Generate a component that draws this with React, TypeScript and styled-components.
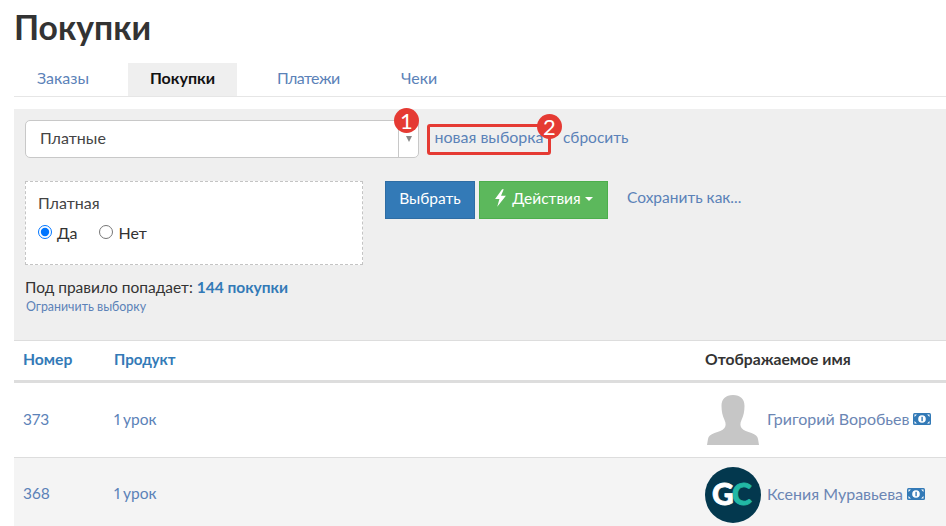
import React from "react";
import styled, { createGlobalStyle } from "styled-components";

const Global = createGlobalStyle`
  html, body { margin: 0; padding: 0; background: #fff; overflow: hidden; }
  body { font-family: "Lato", "Noto Sans", "Liberation Sans", sans-serif; font-size: 15.5px; color: #333; }
`;

const Page = styled.div`
  width: 946px; height: 526px; overflow: hidden; padding-left: 14px; box-sizing: border-box;
`;
const Title = styled.h1`
  margin: 0; height: 63px; box-sizing: border-box; padding: 8px 0 0; font-size: 33.7px; line-height: 38px; font-weight: 700; color: #333;
`;
const Tabs = styled.nav`
  display: flex; height: 34px; box-sizing: border-box; border-bottom: 1px solid #e6e6e6; margin-bottom: 12px;
`;
const Tab = styled.a<{ $pad: number; $w: number; $tight?: boolean }>`
  width: ${p => p.$w}px; height: 33px; box-sizing: border-box; display: flex; align-items: center;
  padding: 0 0 4px ${p => p.$pad}px; font-size: 16px; color: #5b82b8;
  letter-spacing: ${p => (p.$tight ? "-0.6px" : "0")};
`;
const ActiveTab = styled.a`
  width: 109px; height: 33px; box-sizing: border-box; display: flex; align-items: center; justify-content: center;
  padding-bottom: 4px; font-size: 16px; font-weight: 700; color: #111; background: #efefef;
`;
const Panel = styled.section`
  height: 232px; box-sizing: border-box; background: #efefef; padding: 11px 11px 0; border-bottom: 1px solid #ddd;
`;
const SelectRow = styled.div`
  display: flex; align-items: center; height: 38px;
`;
const Select = styled.div`
  position: relative; width: 394px; height: 38px; box-sizing: border-box; background: #fff;
  border: 1px solid #c8c8c8; border-radius: 5px; display: flex; align-items: center;
  padding: 0 0 3px 14px; font-size: 16px; color: #444;
`;
const Arrow = styled.div`
  position: absolute; right: 0; top: 0; bottom: 0; width: 19px; border-left: 1px solid #c8c8c8;
  display: flex; align-items: center; justify-content: center;
  &::after { content: ""; border-left: 3.5px solid transparent; border-right: 3.5px solid transparent; border-top: 6px solid #888; }
`;
const Badge = styled.span<{ $left: number }>`
  position: absolute; left: ${p => p.$left}px; top: -13px; width: 25px; height: 25px; border-radius: 50%;
  background: #e53a33; color: #fff; font-size: 22px; line-height: 25px; text-align: center; font-weight: 400;
`;
const Highlight = styled.a`
  position: relative; margin-left: 8px; width: 124px; height: 31px; box-sizing: border-box;
  border: 3px solid #e53a33; border-radius: 3px; display: flex; align-items: center; justify-content: center;
  padding-bottom: 5px; font-size: 16px; color: #5b82b8; white-space: nowrap;
`;
const TextLink = styled.a`
  font-size: 15.5px; color: #5b82b8; white-space: nowrap;
`;
const ResetLink = styled(TextLink)`
  margin: 0 0 5px 12px;
`;
const FilterRow = styled.div`
  display: flex; align-items: flex-start; margin-top: 23px;
`;
const RuleBox = styled.div`
  width: 338px; height: 84px; box-sizing: border-box; background: #fff; border: 1px dashed #c4c4c4;
  padding: 12px 12px 0; margin-right: 22px;
`;
const RuleTitle = styled.div`
  font-size: 16px; line-height: 18px; color: #444;
`;
const Radios = styled.div`
  display: flex; margin-top: 12px; align-items: center;
`;
const RadioLabel = styled.label`
  display: flex; align-items: center; gap: 5px; font-size: 16px; line-height: 18px; color: #333; margin-right: 22px;
`;
const Radio = styled.input`
  width: 14px; height: 14px; margin: 0 0 3px 0;
`;
const Button = styled.button<{ $bg: string; $border: string; $w: number }>`
  width: ${p => p.$w}px; height: 38px; box-sizing: border-box; border: 1px solid ${p => p.$border}; background: ${p => p.$bg};
  color: #fff; font: inherit; font-size: 15.5px; padding: 0 0 5px; display: inline-flex; align-items: center; justify-content: center; gap: 5px;
`;
const ActionButton = styled(Button)`
  margin-left: 4px;
`;
const Caret = styled.span`
  border-left: 4px solid transparent; border-right: 4px solid transparent; border-top: 4px solid #fff; margin: 3px 0 0 -1px;
`;
const SaveLink = styled(TextLink)`
  margin-left: 19px; line-height: 33px;
`;
const Summary = styled.p`
  margin: 13px 0 0; font-size: 15.5px; line-height: 18px; color: #333;
  b { color: #337ab7; font-weight: 700; }
`;
const Narrow = styled.a`
  display: block; margin: 3px 0 0 1px; font-size: 12.4px; line-height: 16px; color: #5b82b8;
`;
const Row = styled.div<{ $h: number; $alt?: boolean; $border: string }>`
  display: grid; grid-template-columns: 91px 591px 1fr; padding-left: 9px; align-items: center;
  height: ${p => p.$h}px; box-sizing: border-box; border-bottom: ${p => p.$border};
  background: ${p => (p.$alt ? "#f4f4f4" : "#fff")};
`;
const HeadLink = styled.span<{ $size?: number }>`
  font-size: ${p => p.$size ?? 15.7}px; font-weight: 700; color: #337ab7; padding-bottom: 3px;
`;
const HeadPlain = styled(HeadLink)`
  color: #333;
`;
const Cell = styled.span`
  font-size: 15.5px; color: #5b82b8; padding-bottom: 3px; font-variant-numeric: proportional-nums; word-spacing: -1px;
`;
const Person = styled.div`
  display: flex; align-items: center; font-size: 16px; color: #6b86b4; white-space: nowrap;
`;
const AvatarSlot = styled.div`
  width: 62px; height: 56px; flex: none; display: flex; align-items: center;
`;
const Name = styled.span`
  padding-bottom: 3px;
`;
const Money = styled.svg`
  margin: 0 0 2px 4px; flex: none;
`;

const MoneyIcon = () => (
  <Money width="18" height="12" viewBox="0 0 18 12">
    <rect width="18" height="12" rx="1.5" fill="#337ab7" />
    <circle cx="9" cy="6" r="3.8" fill="#fff" />
    <rect x="8.4" y="3.8" width="1.4" height="4.4" fill="#337ab7" />
    <path d="M1.5 1.5h2.4L1.5 3.9zM16.5 1.5h-2.4l2.4 2.4zM1.5 10.5h2.4L1.5 8.1zM16.5 10.5h-2.4l2.4-2.4z" fill="#fff" />
  </Money>
);

const Silhouette = () => (
  <svg width="52" height="50" viewBox="0 0 52 50" style={{ marginLeft: 2 }}>
    <path
      d="M26 0c-7.5 0-11.5 4-11.5 11 0 5 1 10 3 14 1.5 3 1.5 6 0 8-2 2.5-6 3.5-10 5-4 1.5-6 3-6.5 6L0 50h52l-1-6c-.5-3-2.5-4.5-6.5-6-4-1.5-8-2.5-10-5-1.5-2-1.5-5 0-8 2-4 3-9 3-14 0-7-4-11-11.5-11z"
      fill="#c6c6c6"
    />
  </svg>
);

const GcLogo = () => (
  <svg width="56" height="56" viewBox="0 0 56 56">
    <circle cx="28" cy="28" r="28" fill="#03384e" />
    <text x="7" y="38" fontFamily="Lato, sans-serif" fontWeight="900" fontSize="30" fill="#fff" stroke="#fff" strokeWidth="0.8">G</text>
    <text x="27" y="38" fontFamily="Lato, sans-serif" fontWeight="900" fontSize="30" fill="#22b8a5" stroke="#22b8a5" strokeWidth="0.8">C</text>
  </svg>
);

export default function App() {
  return (
    <Page>
      <Global />
      <Title>Покупки</Title>
      <Tabs>
        <Tab $pad={23} $w={114}>Заказы</Tab>
        <ActiveTab>Покупки</ActiveTab>
        <Tab $pad={40} $w={124} $tight>Платежи</Tab>
        <Tab $pad={40} $w={80}>Чеки</Tab>
      </Tabs>
      <Panel>
        <SelectRow>
          <Select>
            Платные
            <Arrow />
            <Badge $left={368}>1</Badge>
          </Select>
          <Highlight>
            новая выборка
            <Badge $left={107}>2</Badge>
          </Highlight>
          <ResetLink>сбросить</ResetLink>
        </SelectRow>
        <FilterRow>
          <RuleBox>
            <RuleTitle>Платная</RuleTitle>
            <Radios>
              <RadioLabel><Radio type="radio" name="paid" defaultChecked />Да</RadioLabel>
              <RadioLabel><Radio type="radio" name="paid" />Нет</RadioLabel>
            </Radios>
          </RuleBox>
          <Button $bg="#337ab7" $border="#2e6da4" $w={90}>Выбрать</Button>
          <ActionButton $bg="#5cb85c" $border="#4cae4c" $w={129}>
            <svg width="13" height="18" viewBox="0 0 12 16"><path d="M7.5 0 1 9h4l-2 7 8-10H6.5L9 0z" fill="#fff" /></svg>
            Действия
            <Caret />
          </ActionButton>
          <SaveLink>Сохранить как...</SaveLink>
        </FilterRow>
        <Summary>Под правило попадает: <b>144 покупки</b></Summary>
        <Narrow>Ограничить выборку</Narrow>
      </Panel>
      <Row $h={42} $border="3px solid #ddd">
        <HeadLink>Номер</HeadLink>
        <HeadLink $size={15.2}>Продукт</HeadLink>
        <HeadPlain>Отображаемое имя</HeadPlain>
      </Row>
      <Row $h={75} $border="1px solid #ddd">
        <Cell>373</Cell>
        <Cell>1 урок</Cell>
        <Person><AvatarSlot><Silhouette /></AvatarSlot><Name>Григорий Воробьев</Name><MoneyIcon /></Person>
      </Row>
      <Row $h={73} $alt $border="none">
        <Cell>368</Cell>
        <Cell>1 урок</Cell>
        <Person><AvatarSlot><GcLogo /></AvatarSlot><Name>Ксения Муравьева</Name><MoneyIcon /></Person>
      </Row>
    </Page>
  );
}
